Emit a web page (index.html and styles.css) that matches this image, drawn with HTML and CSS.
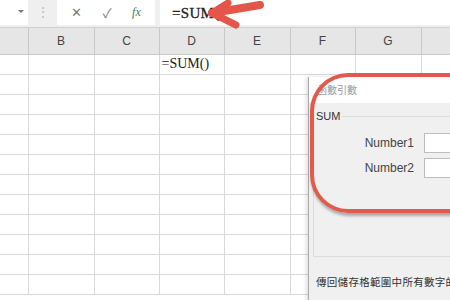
FILE: index.html
```html
<!DOCTYPE html>
<html lang="zh-Hant">
<head>
    <meta charset="UTF-8">
    <meta name="viewport" content="width=device-width, initial-scale=1.0">
    <title>SUM</title>
    <link rel="stylesheet" href="styles.css">
</head>
<body>

    <div class="sheet">

        <div class="formula-bar">
            <div class="name-box"><span class="caret"></span></div>
            <div class="grip">⋮</div>
            <div class="fx-box">
                <span class="cancel">✕</span>
                <span class="enter">✓</span>
                <span class="fx">fx</span>
            </div>
            <div class="formula">=SUM(</div>
        </div>

        <table class="grid">
            <colgroup>
                <col style="width:28px"><col style="width:66px"><col style="width:65px"><col style="width:65px">
                <col style="width:66px"><col style="width:65px"><col style="width:66px"><col style="width:29px">
            </colgroup>
            <thead>
                <tr><th></th><th>B</th><th>C</th><th>D</th><th>E</th><th>F</th><th>G</th><th></th></tr>
            </thead>
            <tbody>
                <tr><td></td><td></td><td></td><td class="cell-text">=SUM()</td><td></td><td></td><td></td><td></td></tr>
                <tr><td></td><td></td><td></td><td></td><td></td><td></td><td></td><td></td></tr>
                <tr><td></td><td></td><td></td><td></td><td></td><td></td><td></td><td></td></tr>
                <tr><td></td><td></td><td></td><td></td><td></td><td></td><td></td><td></td></tr>
                <tr><td></td><td></td><td></td><td></td><td></td><td></td><td></td><td></td></tr>
                <tr><td></td><td></td><td></td><td></td><td></td><td></td><td></td><td></td></tr>
                <tr><td></td><td></td><td></td><td></td><td></td><td></td><td></td><td></td></tr>
                <tr><td></td><td></td><td></td><td></td><td></td><td></td><td></td><td></td></tr>
                <tr><td></td><td></td><td></td><td></td><td></td><td></td><td></td><td></td></tr>
                <tr><td></td><td></td><td></td><td></td><td></td><td></td><td></td><td></td></tr>
                <tr><td></td><td></td><td></td><td></td><td></td><td></td><td></td><td></td></tr>
                <tr><td></td><td></td><td></td><td></td><td></td><td></td><td></td><td></td></tr>
            </tbody>
        </table>

        <!-- arrow pointing at the formula -->
        <svg class="arrow" width="80" height="30" viewBox="0 0 80 30">
            <g stroke="#e5564a" stroke-linecap="round" stroke-linejoin="round" fill="none">
                <path d="M14 13 L62 5" stroke-width="8"/>
                <path d="M30 3 L14 13 L38 25" stroke-width="7"/>
            </g>
        </svg>

        <div class="dialog">
            <div class="dialog-title">函數引數</div>
            <div class="dialog-body">
                <fieldset class="group">
                    <legend>SUM</legend>
                    <div class="arg-row">
                        <label>Number1</label>
                        <input type="text">
                    </div>
                    <div class="arg-row">
                        <label>Number2</label>
                        <input type="text">
                    </div>
                </fieldset>
                <p class="desc">傳回儲存格範圍中所有數字的</p>
            </div>
        </div>

        <div class="highlight"></div>

    </div>

</body>
</html>
```

FILE: styles.css
```css
body{
  margin: 0;
  font-family: 'Liberation Sans', 'Noto Sans CJK TC', sans-serif;
  background: white;
}

.sheet{
  position: relative;
  width: 450px;
  height: 300px;
  overflow: hidden;
}

/* formula bar */

.formula-bar{
  display: flex;
  height: 28px;
  background: #efefef;
  border-bottom: 1px solid #d0d0d0;
  box-sizing: border-box;
}

.name-box{
  width: 28px;
  height: 25px;
  background: white;
  display: flex;
  justify-content: flex-end;
  align-items: center;
  padding-right: 4px;
  box-sizing: border-box;
}

.caret{
  width: 0;
  height: 0;
  border-left: 3px solid transparent;
  border-right: 3px solid transparent;
  border-top: 3px solid #777;
  margin-top: -2px;
}

.grip{
  width: 29px;
  text-align: center;
  color: #b8b8b8;
  font-size: 12px;
  line-height: 24px;
}

.fx-box{
  width: 98px;
  height: 25px;
  background: white;
  display: flex;
  justify-content: space-around;
  align-items: center;
  padding: 0 4px;
  box-sizing: border-box;
}

.cancel{
  color: #7a7a7a;
  font-size: 13px;
}

.enter{
  color: #7a7a7a;
  font-size: 13px;
}

.fx{
  font-family: 'Liberation Serif', serif;
  font-style: italic;
  color: #3f7d5c;
  font-size: 12px;
}

.formula{
  flex: 1;
  margin-left: 5px;
  height: 25px;
  background: white;
  font-family: 'Liberation Serif', serif;
  font-size: 15px;
  color: #222;
  line-height: 26px;
  padding-left: 12px;
  letter-spacing: 0.3px;
  -webkit-text-stroke: 0.3px #222;
}

/* cells */

.grid{
  border-collapse: collapse;
  table-layout: fixed;
  width: 450px;
}

.grid th{
  height: 26px;
  padding: 0;
  background: #e6e6e6;
  border-right: 1px solid #c8c8c8;
  border-bottom: 1px solid #c8c8c8;
  font-weight: normal;
  font-size: 12px;
  color: #444;
  box-sizing: border-box;
}

.grid td{
  height: 20px;
  padding: 0 2px;
  border-right: 1px solid #d9d9d9;
  border-bottom: 1px solid #d9d9d9;
  box-sizing: border-box;
}

.cell-text{
  font-family: 'Liberation Serif', serif;
  font-size: 14px;
  color: #222;
  white-space: nowrap;
  overflow: visible;
}

/* overlays */

.arrow{
  position: absolute;
  left: 198px;
  top: 0;
}

.dialog{
  position: absolute;
  left: 308px;
  top: 77px;
  width: 160px;
  height: 240px;
  background: #f0f0f0;
  border-left: 1px solid #a9a9a9;
  box-shadow: -2px 0 4px rgba(0, 0, 0, 0.12);
}

.dialog-title{
  height: 26px;
  background: white;
  color: #9a9a9a;
  font-size: 10px;
  line-height: 28px;
  padding-left: 8px;
}

.dialog-body{
  padding: 7px 0 0 4px;
}

.group{
  margin: 0;
  height: 147px;
  padding: 11px 0 0 0;
  border: 1px solid #dcdcdc;
  border-right: none;
  box-sizing: border-box;
}

.group legend{
  padding: 0 2px;
  margin-left: 0;
  font-size: 11px;
  color: #333;
}

.arg-row{
  display: flex;
  align-items: center;
  gap: 10px;
  margin-bottom: 5px;
}

.arg-row label{
  width: 100px;
  text-align: right;
  font-size: 12px;
  color: #444;
}

.arg-row input{
  width: 40px;
  height: 20px;
  margin: 0;
  border: 1px solid #bdbdbd;
  background: white;
  box-sizing: border-box;
}

.desc{
  margin: 17px 0 0 3px;
  font-size: 10.5px;
  letter-spacing: 0.3px;
  color: #333;
  white-space: nowrap;
}

.highlight{
  position: absolute;
  left: 310px;
  top: 73px;
  width: 160px;
  height: 140px;
  border: 4px solid #e25a4c;
  border-right: none;
  border-radius: 38px 0 0 38px;
  box-sizing: border-box;
  box-shadow: 1px 3px 3px rgba(0, 0, 0, 0.3);
}
```
